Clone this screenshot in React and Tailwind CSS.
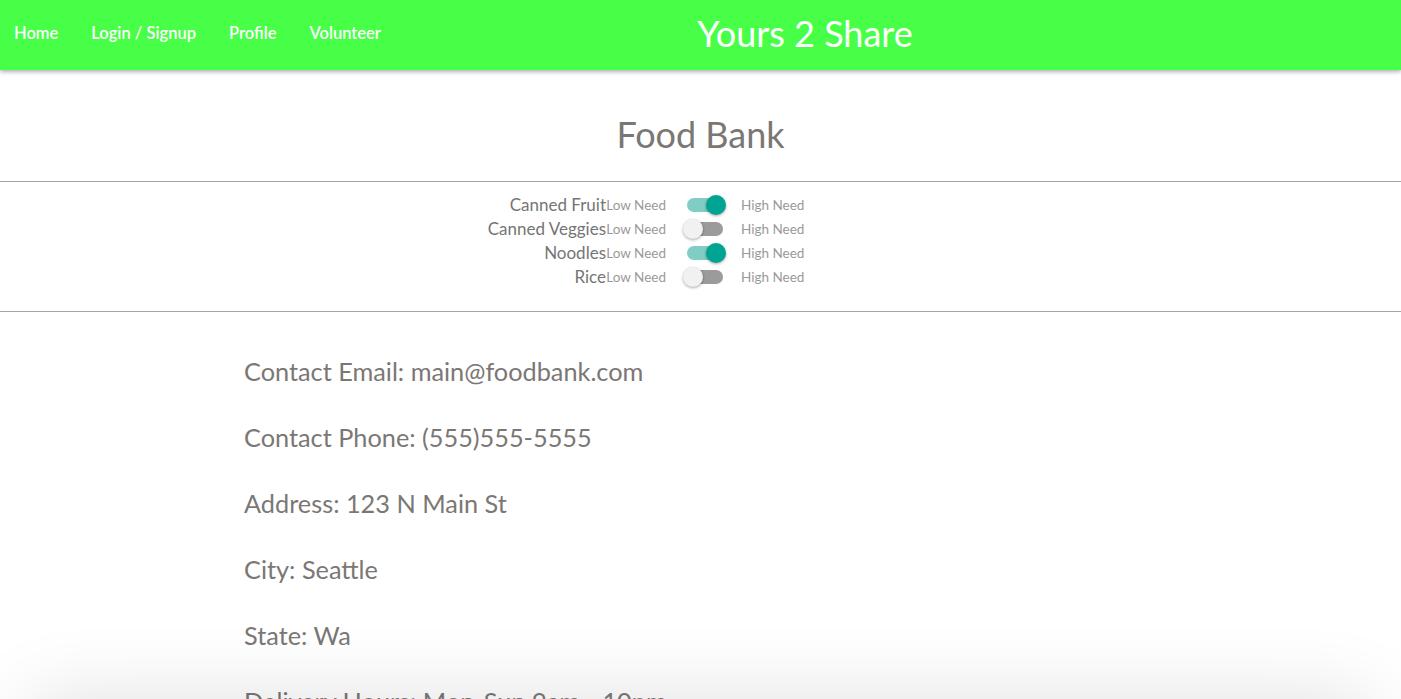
import { useState } from "react";

const items = [
  { name: "Canned Fruit", high: true },
  { name: "Canned Veggies", high: false },
  { name: "Noodles", high: true },
  { name: "Rice", high: false },
];

const details = [
  "Contact Email: main@foodbank.com",
  "Contact Phone: (555)555-5555",
  "Address: 123 N Main St",
  "City: Seattle",
  "State: Wa",
  "Delivery Hours: Mon-Sun 9am - 10pm",
];

function NeedSwitch({ on, onToggle }) {
  return (
    <button
      type="button"
      onClick={onToggle}
      className="relative w-[44px] h-[24px] flex items-center justify-center"
    >
      <span
        className={`block w-[36px] h-[14px] rounded-full ${
          on ? "bg-[#7fcdc4]" : "bg-[#9b9b9b]"
        }`}
      ></span>
      <span
        className={`absolute top-[2px] w-[20px] h-[20px] rounded-full shadow-[0_1px_3px_rgba(0,0,0,0.35)] ${
          on ? "left-[23px] bg-[#00a493]" : "left-[0px] bg-[#f1f1f1]"
        }`}
      ></span>
    </button>
  );
}

export default function App() {
  const [needs, setNeeds] = useState(items.map((i) => i.high));

  const toggle = (idx) => {
    setNeeds((prev) => prev.map((v, i) => (i === idx ? !v : v)));
  };

  return (
    <div className="min-h-screen bg-white font-['Lato','Open_Sans',sans-serif] text-[#7b7775]">
      {/* Header */}
      <header className="h-[70px] bg-[#46ff46] flex items-center pb-[4px] shadow-[0_2px_4px_rgba(0,0,0,0.3)]">
        <nav className="w-[400px] flex items-center gap-[33px] pl-[14px] text-white text-[16.5px] font-semibold">
          <a href="#">Home</a>
          <a href="#">Login / Signup</a>
          <a href="#">Profile</a>
          <a href="#">Volunteer</a>
        </nav>
        <h1 className="w-[810px] text-center text-white text-[36px] leading-none">
          Yours 2 Share
        </h1>
      </header>

      {/* Title */}
      <h2 className="text-center text-[36px] leading-none pt-[46px] pb-[29px]">
        Food Bank
      </h2>
      <hr className="border-t border-[#a3a3a3]" />

      {/* Needs */}
      <div className="flex flex-col items-center pt-[11px] pb-[22px]">
        {items.map((item, idx) => (
          <div key={item.name} className="flex items-center h-[24px]">
            <span className="w-[606px] text-right text-[17px] text-[#757575]">
              {item.name}
            </span>
            <span className="w-[60px] text-right text-[13.5px] text-[#9a9a9a]">
              Low Need
            </span>
            <span className="w-[75px] flex justify-center pl-[2px]">
              <NeedSwitch on={needs[idx]} onToggle={() => toggle(idx)} />
            </span>
            <span className="w-[660px] text-[13.5px] text-[#9a9a9a]">High Need</span>
          </div>
        ))}
      </div>
      <hr className="border-t border-[#a3a3a3]" />

      {/* Details */}
      <div className="pl-[244px] pt-[45px] flex flex-col gap-[37px]">
        {details.map((d) => (
          <p key={d} className="text-[25.3px] leading-[29px]">
            {d}
          </p>
        ))}
      </div>

      {/* Bottom card shadow peeking in */}
      <div className="fixed left-[20px] right-[20px] top-[700px] h-[80px] rounded-[40px] bg-white shadow-[0_0_80px_rgba(0,0,0,0.13)] pointer-events-none"></div>
    </div>
  );
}
